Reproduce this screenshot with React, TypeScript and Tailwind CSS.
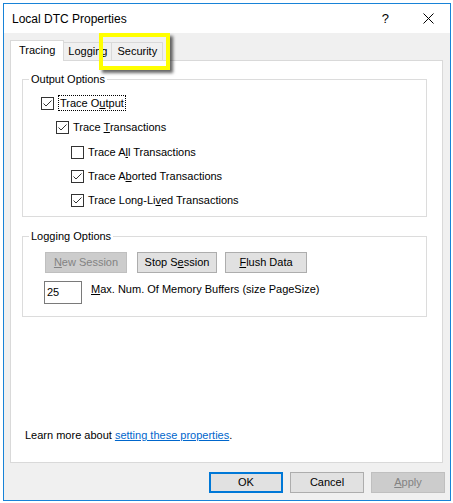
import type { ReactNode } from 'react';

const font = "font-['Liberation_Sans',Arial,sans-serif]";

function CheckBox({ checked }: { checked: boolean }) {
  return (
    <svg width="13" height="13" viewBox="0 0 13 13" className="shrink-0">
      <rect x="0.5" y="0.5" width="12" height="12" fill="#fff" stroke="#333" />
      {checked && (
        <polyline points="2.5,6.5 5,9 10.5,3.5" fill="none" stroke="#333" strokeWidth="1" />
      )}
    </svg>
  );
}

function CheckRow({
  checked,
  indent,
  h,
  children,
}: {
  checked: boolean;
  indent: string;
  h: string;
  children: ReactNode;
}) {
  return (
    <div className={`flex items-center gap-[4px] ${indent} ${h}`}>
      <CheckBox checked={checked} />
      {children}
    </div>
  );
}

function Btn({
  children,
  disabled,
  primary,
  w,
}: {
  children: ReactNode;
  disabled?: boolean;
  primary?: boolean;
  w: string;
}) {
  const base = `${w} h-[21px] flex items-center justify-center text-[11px] leading-none`;
  if (disabled) {
    return <div className={`${base} bg-[#cccccc] border border-[#bfbfbf] text-[#838383]`}>{children}</div>;
  }
  if (primary) {
    return <div className={`${base} bg-[#e1e1e1] border-2 border-[#0078d7] text-black`}>{children}</div>;
  }
  return <div className={`${base} bg-[#e1e1e1] border border-[#adadad] text-black`}>{children}</div>;
}

export default function App() {
  return (
    <div className={`w-[453px] h-[503px] bg-white pt-[3px] pl-[3px] ${font} text-[11px] text-black`}>
      <div className="w-[448px] h-[498px] border border-[#1883d7] flex flex-col bg-[#f0f0f0]">
        {/* Title bar */}
        <div className="h-[29px] bg-white flex items-center pl-[8px]">
          <span className="text-[12px] leading-none">Local DTC Properties</span>
          <span className="ml-auto text-[13px] leading-none mr-[34px]">?</span>
          <svg width="11" height="11" viewBox="0 0 11 11" className="mr-[16px]">
            <path d="M0.5 0.5 L10.5 10.5 M10.5 0.5 L0.5 10.5" stroke="#000" strokeWidth="1" />
          </svg>
        </div>

        <div className="flex flex-col pl-[6px] pt-[7px]">
          {/* Tabs */}
          <div className="relative z-10 flex items-end h-[21px] -mb-px">
            <div className="h-[21px] px-[8px] pt-[3px] bg-white border-l border-t border-r border-[#d9d9d9] leading-[13px]">
              Tracing
            </div>
            <div className="h-[18px] mb-px px-[4px] pt-[2px] bg-[#f0f0f0] border-t border-r border-[#d9d9d9] leading-[13px]">
              Logging
            </div>
            <div className="h-[18px] mb-px px-[5px] pt-[2px] bg-[#f0f0f0] border-t border-r border-[#d9d9d9] leading-[13px]">
              Security
            </div>
            {/* yellow highlight around the Security tab */}
            <div className="absolute left-[89px] top-[-7px] w-[71px] h-[37px] border-4 border-[#ffff00] shadow-[3px_3px_3px_rgba(0,0,0,0.6)]" />
          </div>

          {/* Panel */}
          <div className="w-[433px] h-[403px] bg-white border border-[#d9d9d9] flex flex-col pl-[11px] pr-[15px]">
            <fieldset className="mt-[12px] border border-[#dcdcdc] h-[144px]">
              <legend className="ml-[6px] px-[2px] leading-[13px]">Output Options</legend>
              <div className="flex flex-col pl-[18px] pt-[5px]">
                <CheckRow checked indent="" h="h-[24px]">
                  <span className="border border-dotted border-black px-[1px] leading-[14px]">
                    Trace O<span className="underline">u</span>tput
                  </span>
                </CheckRow>
                <CheckRow checked indent="pl-[15px]" h="h-[25px]">
                  <span className="leading-[13px]">
                    Trace <span className="underline">T</span>ransactions
                  </span>
                </CheckRow>
                <CheckRow checked={false} indent="pl-[30px]" h="h-[25px]">
                  <span className="leading-[13px]">
                    Trace A<span className="underline">l</span>l Transactions
                  </span>
                </CheckRow>
                <CheckRow checked indent="pl-[30px]" h="h-[23px]">
                  <span className="leading-[13px]">
                    Trace A<span className="underline">b</span>orted Transactions
                  </span>
                </CheckRow>
                <CheckRow checked indent="pl-[30px]" h="h-[24px]">
                  <span className="leading-[13px]">
                    Trace Long-Li<span className="underline">v</span>ed Transactions
                  </span>
                </CheckRow>
              </div>
            </fieldset>

            <fieldset className="mt-[13px] border border-[#dcdcdc] h-[87px]">
              <legend className="ml-[6px] px-[2px] leading-[13px]">Logging Options</legend>
              <div className="flex flex-col pl-[22px] pt-[9px]">
                <div className="flex">
                  <Btn disabled w="w-[82px]">
                    <span className="underline">N</span>ew Session
                  </Btn>
                  <div className="ml-[10px]">
                    <Btn w="w-[80px]">
                      Stop S<span className="underline">e</span>ssion
                    </Btn>
                  </div>
                  <div className="ml-[8px]">
                    <Btn w="w-[82px]">
                      <span className="underline">F</span>lush Data
                    </Btn>
                  </div>
                </div>
                <div className="flex items-start mt-[8px] -ml-px">
                  <div className="w-[38px] h-[23px] border border-[#7a7a7a] bg-white pl-[2px] pt-[4px] leading-[13px]">
                    25
                  </div>
                  <div className="ml-[9px] pt-[2px] leading-[13px]">
                    <span className="underline">M</span>ax. Num. Of Memory Buffers (size PageSize)
                  </div>
                </div>
              </div>
            </fieldset>

            <div className="mt-auto mb-[20px] ml-[3px] leading-[13px]">
              Learn more about <span className="text-[#0066cc] underline">setting these properties</span>.
            </div>
          </div>

          {/* Dialog buttons */}
          <div className="flex justify-end gap-[7px] mt-[9px] pr-[5px]">
            <Btn primary w="w-[74px]">OK</Btn>
            <Btn w="w-[74px]">Cancel</Btn>
            <Btn disabled w="w-[74px]">
              <span className="underline">A</span>pply
            </Btn>
          </div>
        </div>
      </div>
    </div>
  );
}
